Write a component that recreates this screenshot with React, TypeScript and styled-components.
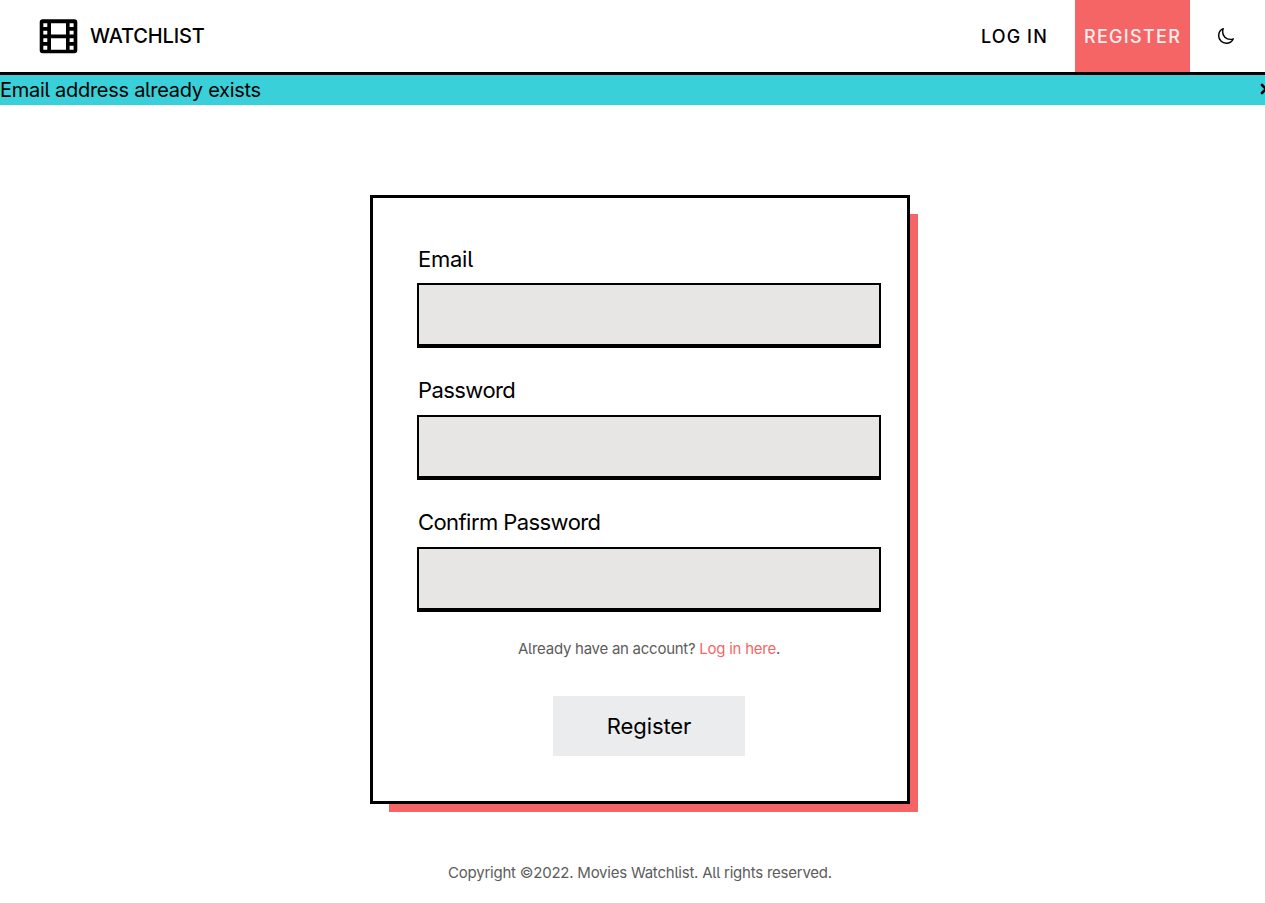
import React from "react";
import styled, { createGlobalStyle } from "styled-components";

const GlobalStyle = createGlobalStyle`
  body {
    margin: 0;
    background: #fff;
    color: #000;
    font-family: Inter, "Liberation Sans", sans-serif;
    font-feature-settings: "cv05";
  }
`;

const Viewport = styled.div`
  height: 903px;
  overflow: hidden;
`;

const Page = styled.div`
  width: 1280px;
  display: flex;
  flex-direction: column;
`;

const Header = styled.header`
  height: 72px;
  border-bottom: 3px solid #000;
  display: flex;
  justify-content: space-between;
`;

const Brand = styled.a`
  display: flex;
  align-items: center;
  gap: 12px;
  padding-left: 39px;
`;

const Line = styled.span<{
  $size: number;
  $width: number;
  $weight?: number;
  $tracking?: number;
}>`
  display: inline-block;
  width: ${(p) => p.$width}px;
  font-size: ${(p) => p.$size}px;
  font-weight: ${(p) => p.$weight ?? 400};
  letter-spacing: ${(p) => p.$tracking ?? 0}px;
  line-height: 30px;
  white-space: nowrap;
`;

const Nav = styled.nav`
  display: flex;
  align-items: stretch;
  width: 299px;
`;

const NavLink = styled.a<{ $active?: boolean }>`
  box-sizing: border-box;
  width: ${(p) => (p.$active ? 115 : 94)}px;
  padding-top: 2px;
  padding-left: ${(p) => (p.$active ? 9 : 0)}px;
  display: flex;
  align-items: center;
  background: ${(p) => (p.$active ? "#f66565" : "transparent")};
  color: ${(p) => (p.$active ? "#fbeeee" : "#000")};
`;

const ThemeToggle = styled.button`
  border: 0;
  padding: 0 0 0 27px;
  background: none;
  display: flex;
  align-items: center;
  color: #000;
`;

const Notice = styled.div`
  height: 30px;
  background: #39d0d9;
  display: flex;
  justify-content: space-between;
`;

const Dismiss = styled.button`
  border: 0;
  padding: 0 8px 2px 0;
  background: none;
  display: flex;
  align-items: center;
`;

const Card = styled.form`
  box-sizing: border-box;
  width: 540px;
  height: 609px;
  margin: 90px auto 0;
  padding: 46px 26px 0 44px;
  border: 3px solid #000;
  background: #fff;
  box-shadow: 13.5px 13.5px 0 -5.5px #f66565;
  display: flex;
  flex-direction: column;
  align-items: center;
`;

const Field = styled.label`
  width: 464px;
  height: 132px;
  display: flex;
  flex-direction: column;
  gap: 9px;

  & + & {
    height: 133px;
    margin-top: -1px;
    gap: 10px;
  }
`;

const Label = styled(Line)`
  padding-left: 1px;
`;

const Input = styled.input`
  box-sizing: border-box;
  width: 464px;
  height: 65px;
  border: 2px solid #000;
  border-bottom-width: 4px;
  border-radius: 0;
  background: #e7e6e4;
  outline: 0;
`;

const Prompt = styled.p`
  margin: -7px 0 32px;
  color: #5c5c5c;
  line-height: 30px;
`;

const PromptLink = styled.a`
  color: #f66565;
`;

const Submit = styled.button`
  width: 192px;
  height: 60px;
  border: 0;
  padding: 0;
  background: #ebecee;
  color: #000;
  font-family: inherit;
  font-feature-settings: inherit;
`;

const Footer = styled.footer`
  margin-top: 54px;
  color: #5c5c5c;
  text-align: center;
`;

const FilmIcon = () => (
  <svg width="39" height="36" viewBox="0 0 39 36">
    <path
      fillRule="evenodd"
      d="M3.7 1.3h31.6a3 3 0 0 1 3 3v28a3 3 0 0 1-3 3H3.7a3 3 0 0 1-3-3v-28a3 3 0 0 1 3-3zM12 5.3v11.3h15V5.3zM12 20.2v11.5h15V20.2zM4.3 5.3v3.6h4V5.3zM4.3 12.8v3.8h4v-3.8zM4.3 20.2v3.9h4v-3.9zM4.3 27.7v4h4v-4zM30.6 5.3v3.6h4V5.3zM30.6 12.8v3.8h4v-3.8zM30.6 20.2v3.9h4v-3.9zM30.6 27.7v4h4v-4z"
    />
  </svg>
);

const MoonIcon = () => (
  <svg
    width="18"
    height="18"
    viewBox="0 0 512 512"
    fill="none"
    stroke="currentColor"
    strokeWidth="42"
    strokeLinejoin="round"
  >
    <path d="M160 136c0-30.62 4.51-61.61 16-88C99.57 81.27 48 159.32 48 248c0 119.29 96.71 216 216 216 88.68 0 166.73-51.57 200-128-26.39 11.49-57.38 16-88 16-119.29 0-216-96.71-216-216z" />
  </svg>
);

const CloseIcon = () => (
  <svg
    width="12"
    height="12"
    viewBox="0 0 12 12"
    stroke="#000"
    strokeWidth="2.6"
    strokeLinecap="round"
  >
    <path d="M2 2l8 8M10 2l-8 8" />
  </svg>
);

const fields = [
  { name: "email", label: "Email", type: "email", width: 56, tracking: -0.25 },
  { name: "password", label: "Password", type: "password", width: 98, tracking: -0.57 },
  { name: "confirm", label: "Confirm Password", type: "password", width: 184, tracking: -0.57 },
];

export default function App() {
  return (
    <Viewport>
      <GlobalStyle />
      <Page>
        <Header>
          <Brand>
            <FilmIcon />
            <Line $size={20} $width={116} $weight={500} $tracking={-0.15}>
              WATCHLIST
            </Line>
          </Brand>
          <Nav>
            <NavLink>
              <Line $size={18} $width={68} $weight={500} $tracking={1.1}>
                LOG IN
              </Line>
            </NavLink>
            <NavLink $active>
              <Line $size={18} $width={98} $weight={500} $tracking={1.3}>
                REGISTER
              </Line>
            </NavLink>
            <ThemeToggle type="button" aria-label="Toggle theme">
              <MoonIcon />
            </ThemeToggle>
          </Nav>
        </Header>
        <Notice>
          <Line $size={20} $width={262} $tracking={-0.28}>
            Email address already exists
          </Line>
          <Dismiss type="button" aria-label="Dismiss">
            <CloseIcon />
          </Dismiss>
        </Notice>
        <Card>
          {fields.map((f) => (
            <Field key={f.name}>
              <Label $size={22} $width={f.width} $tracking={f.tracking}>
                {f.label}
              </Label>
              <Input name={f.name} type={f.type} />
            </Field>
          ))}
          <Prompt>
            <Line $size={15} $width={262} $tracking={-0.26}>
              Already have an account? <PromptLink>Log in here</PromptLink>.
            </Line>
          </Prompt>
          <Submit type="button">
            <Line $size={22} $width={85} $tracking={-0.1}>
              Register
            </Line>
          </Submit>
        </Card>
        <Footer>
          <Line $size={15} $width={385} $tracking={-0.23}>
            Copyright ©2022. Movies Watchlist. All rights reserved.
          </Line>
        </Footer>
      </Page>
    </Viewport>
  );
}
